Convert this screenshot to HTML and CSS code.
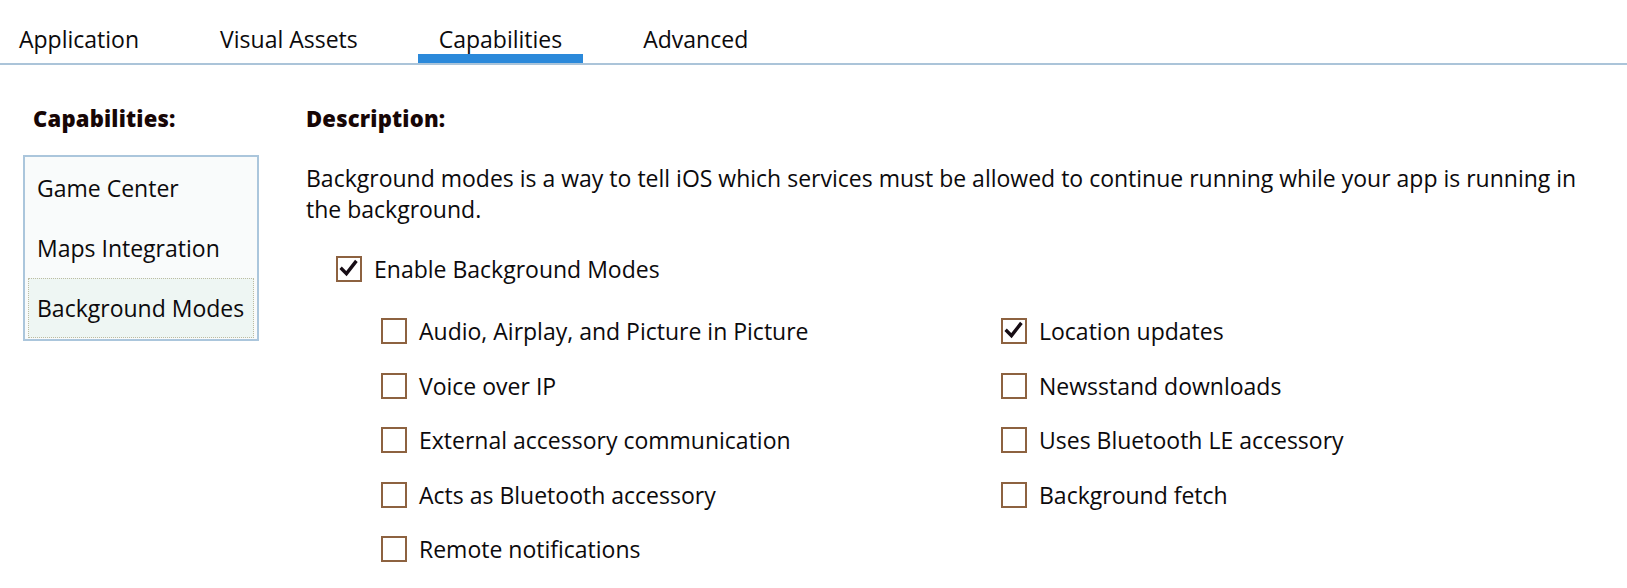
FILE: index.html
```html
<!DOCTYPE html>
<html>
<head>
<meta charset="utf-8">
<link rel="stylesheet" href="styles.css">
</head>
<body>
<nav class="tabs">
  <div class="tab">Application</div>
  <div class="tab">Visual Assets</div>
  <div class="tab active">Capabilities</div>
  <div class="tab">Advanced</div>
</nav>
<main class="content">
  <section class="left">
    <h2 class="heading">Capabilities:</h2>
    <ul class="caplist">
      <li class="capitem">Game Center</li>
      <li class="capitem">Maps Integration</li>
      <li class="capitem selected">Background Modes</li>
    </ul>
  </section>
  <section class="right">
    <h2 class="heading">Description:</h2>
    <p class="desc">Background modes is a way to tell iOS which services must be allowed to continue running while your app is running in the background.</p>
    <label class="check enable"><span class="box checked"><svg viewBox="0 0 26 26" width="22" height="22"><path d="M4.5 13 L10 18.5 L20.5 5" fill="none" stroke="#160c14" stroke-width="4" stroke-linecap="square" stroke-linejoin="miter"/></svg></span>Enable Background Modes</label>
    <div class="modes">
      <label class="check"><span class="box"></span>Audio, Airplay, and Picture in Picture</label>
      <label class="check"><span class="box"></span>Voice over IP</label>
      <label class="check"><span class="box"></span>External accessory communication</label>
      <label class="check"><span class="box"></span>Acts as Bluetooth accessory</label>
      <label class="check"><span class="box"></span>Remote notifications</label>
      <label class="check"><span class="box checked"><svg viewBox="0 0 26 26" width="22" height="22"><path d="M4.5 13 L10 18.5 L20.5 5" fill="none" stroke="#160c14" stroke-width="4" stroke-linecap="square" stroke-linejoin="miter"/></svg></span>Location updates</label>
      <label class="check"><span class="box"></span>Newsstand downloads</label>
      <label class="check"><span class="box"></span>Uses Bluetooth LE accessory</label>
      <label class="check"><span class="box"></span>Background fetch</label>
    </div>
  </section>
</main>
</body>
</html>
```
FILE: styles.css
```css
* { box-sizing: border-box; }
html, body { margin: 0; padding: 0; background: #ffffff; }
body {
  font-family: "Open Sans", "Noto Sans", sans-serif;
  font-size: 23px;
  color: #0c0a0c;
  width: 1627px;
  height: 588px;
  overflow: hidden;
}
.tabs {
  display: flex;
  gap: 39px;
  height: 65px;
  border-bottom: 2px solid #abc4d9;
}
.tab {
  padding: 24px 21px 0 21px;
  line-height: 30px;
  height: 63px;
  border-bottom: 9px solid transparent;
}
.tab:first-child { padding-left: 19px; }
.tab.active { border-bottom-color: #2b89da; }
.content {
  display: flex;
  padding-top: 38px;
}
.left {
  margin-left: 23px;
  width: 236px;
}
.right {
  margin-left: 47px;
  flex: 1;
  padding-right: 14px;
}
.heading {
  margin: 0;
  font-size: 22px;
  font-weight: 800;
  line-height: 30px;
  color: #170606;
  padding-left: 10px;
  letter-spacing: 0.2px;
}
.right .heading { padding-left: 0; }
.caplist {
  list-style: none;
  margin: 22px 0 0 0;
  padding: 1px;
  border: 2px solid #abc6dc;
  background: #f9fbfb;
  width: 236px;
}
.capitem {
  height: 60px;
  line-height: 60px;
  padding-left: 11px;
  white-space: nowrap;
}
.capitem.selected {
  background: #eef6f3;
  border: 1px dotted #bdbca2;
  line-height: 58px;
  margin: 0 2px;
  padding-left: 8px;
}
.desc {
  margin: 30px 0 0 0;
  line-height: 31px;
}
.check {
  display: flex;
  align-items: center;
  gap: 12px;
  height: 30px;
  white-space: nowrap;
}
.enable {
  margin: 29px 0 0 30px;
}
.box {
  width: 26px;
  height: 26px;
  border: 2px solid #8d6240;
  background: #fff;
  display: flex;
  align-items: center;
  justify-content: center;
  flex: none;
}
.modes {
  margin: 32px 0 0 75px;
  display: grid;
  grid-template-columns: 620px 1fr;
  grid-template-rows: repeat(5, 30px);
  grid-auto-flow: column;
  row-gap: 24.5px;
}
```
